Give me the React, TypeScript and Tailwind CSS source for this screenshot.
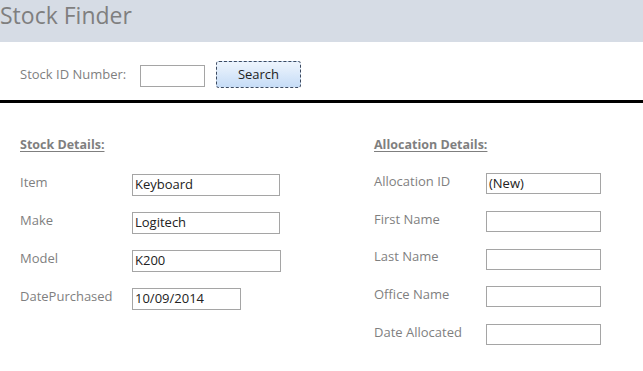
const font = { fontFamily: '"Open Sans", "Noto Sans", sans-serif' }

function Field({ label, value, width, h = 'h-[22px] mb-[16px]' }: { label: string; value?: string; width: string; h?: string }) {
  return (
    <div className={`flex items-center ${h}`}>
      <span className="w-[112px] text-[13px] text-[#7f7f7f] -mt-[4px]">{label}</span>
      <div className={`${width} h-full border border-[#a5a5a5] bg-white px-[2px] text-[13px] text-[#222] leading-[19px]`}>
        {value}
      </div>
    </div>
  )
}

export default function App() {
  return (
    <div className="w-[643px] h-[371px] bg-white overflow-hidden" style={font}>
      {/* Title bar */}
      <div className="h-[42px] bg-[#d6dce5] flex items-center">
        <span className="text-[23px] text-[#7f7f7f] leading-none -mt-[12px]">Stock Finder</span>
      </div>

      {/* Search row */}
      <div className="h-[58px] flex items-center pl-[20px] pt-[10px]">
        <span className="text-[13px] text-[#7f7f7f] w-[120px] -mt-[2px]">Stock ID Number:</span>
        <div className="w-[65px] h-[22px] border border-[#a5a5a5] bg-white" />
        <button className="ml-[11px] w-[85px] h-[27px] border border-dashed border-[#3c4a60] rounded-[3px] bg-gradient-to-b from-[#eef5fd] to-[#c6dcf6] text-[13px] text-[#222] -mt-[3px]">
          Search
        </button>
      </div>
      <div className="h-[3px] bg-black" />

      {/* Details */}
      <div className="flex pt-[33px]">
        <div className="pl-[20px] w-[374px]">
          <div className="text-[12.5px] font-bold text-[#7f7f7f] underline underline-offset-2 h-[20px] mb-[18px]">
            Stock Details:
          </div>
          <Field label="Item" value="Keyboard" width="w-[148px]" />
          <Field label="Make" value="Logitech" width="w-[148px]" />
          <Field label="Model" value="K200" width="w-[149px]" />
          <Field label="DatePurchased" value="10/09/2014" width="w-[109px]" />
        </div>
        <div>
          <div className="text-[12.5px] font-bold text-[#7f7f7f] underline underline-offset-2 h-[20px] mb-[17px]">
            Allocation Details:
          </div>
          <Field label="Allocation ID" value="(New)" width="w-[115px]" h="h-[21px] mb-[16.75px]" />
          <Field label="First Name" width="w-[115px]" h="h-[21px] mb-[16.75px]" />
          <Field label="Last Name" width="w-[115px]" h="h-[21px] mb-[16.75px]" />
          <Field label="Office Name" width="w-[115px]" h="h-[21px] mb-[16.75px]" />
          <Field label="Date Allocated" width="w-[115px]" h="h-[21px] mb-[16.75px]" />
        </div>
      </div>
    </div>
  )
}
